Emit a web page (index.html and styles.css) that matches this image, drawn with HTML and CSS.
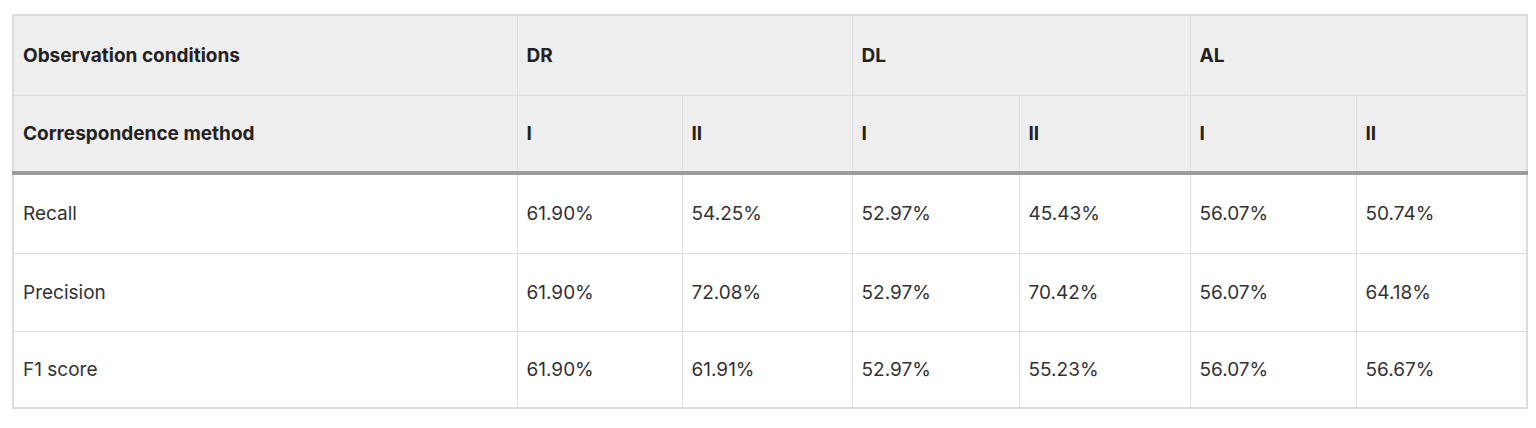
FILE: index.html
```html
<!DOCTYPE html>
<html lang="en">
<head>
<meta charset="utf-8">
<title>Observation conditions</title>
<link rel="stylesheet" href="styles.css">
</head>
<body>
<div class="wrap">
<table class="data">
  <colgroup>
    <col class="c-label">
    <col class="c-a">
    <col class="c-b">
    <col class="c-c">
    <col class="c-d">
    <col class="c-e">
    <col class="c-f">
  </colgroup>
  <thead>
    <tr class="h1">
      <th>Observation conditions</th>
      <th colspan="2">DR</th>
      <th colspan="2">DL</th>
      <th colspan="2">AL</th>
    </tr>
    <tr class="h2">
      <th>Correspondence method</th>
      <th>I</th>
      <th>II</th>
      <th>I</th>
      <th>II</th>
      <th>I</th>
      <th>II</th>
    </tr>
  </thead>
  <tbody>
    <tr class="r1">
      <td>Recall</td>
      <td>61.90%</td>
      <td>54.25%</td>
      <td>52.97%</td>
      <td>45.43%</td>
      <td>56.07%</td>
      <td>50.74%</td>
    </tr>
    <tr class="r2">
      <td>Precision</td>
      <td>61.90%</td>
      <td>72.08%</td>
      <td>52.97%</td>
      <td>70.42%</td>
      <td>56.07%</td>
      <td>64.18%</td>
    </tr>
    <tr class="r3">
      <td>F1 score</td>
      <td>61.90%</td>
      <td>61.91%</td>
      <td>52.97%</td>
      <td>55.23%</td>
      <td>56.07%</td>
      <td>56.67%</td>
    </tr>
  </tbody>
</table>
</div>
</body>
</html>
```

FILE: styles.css
```css
html, body {
  margin: 0;
  padding: 0;
  background: #ffffff;
}

.wrap {
  padding: 14px 0 0 12px;
}

.data {
  border-collapse: collapse;
  table-layout: fixed;
  width: 1516px;
  border: 2px solid #dcdcdc;
  font-family: Inter, "Liberation Sans", sans-serif;
  font-size: 19px;
  color: #333333;
}

.c-label { width: 504px; }
.c-a { width: 165px; }
.c-b { width: 170px; }
.c-c { width: 167px; }
.c-d { width: 171px; }
.c-e { width: 166px; }
.c-f { width: 171px; }

.data th,
.data td {
  border: 1px solid #dddddd;
  padding: 0 9px;
  text-align: left;
  vertical-align: middle;
  white-space: nowrap;
}

.data th {
  background: #eeeeee;
  color: #222222;
  font-weight: 700;
}

.data thead {
  border-bottom: 4px solid #9b9b9b;
}

.h1 { height: 80px; }
.h2 { height: 78px; }
.r1 { height: 80px; }
.r2 { height: 78px; }
.r3 { height: 77px; }
```
